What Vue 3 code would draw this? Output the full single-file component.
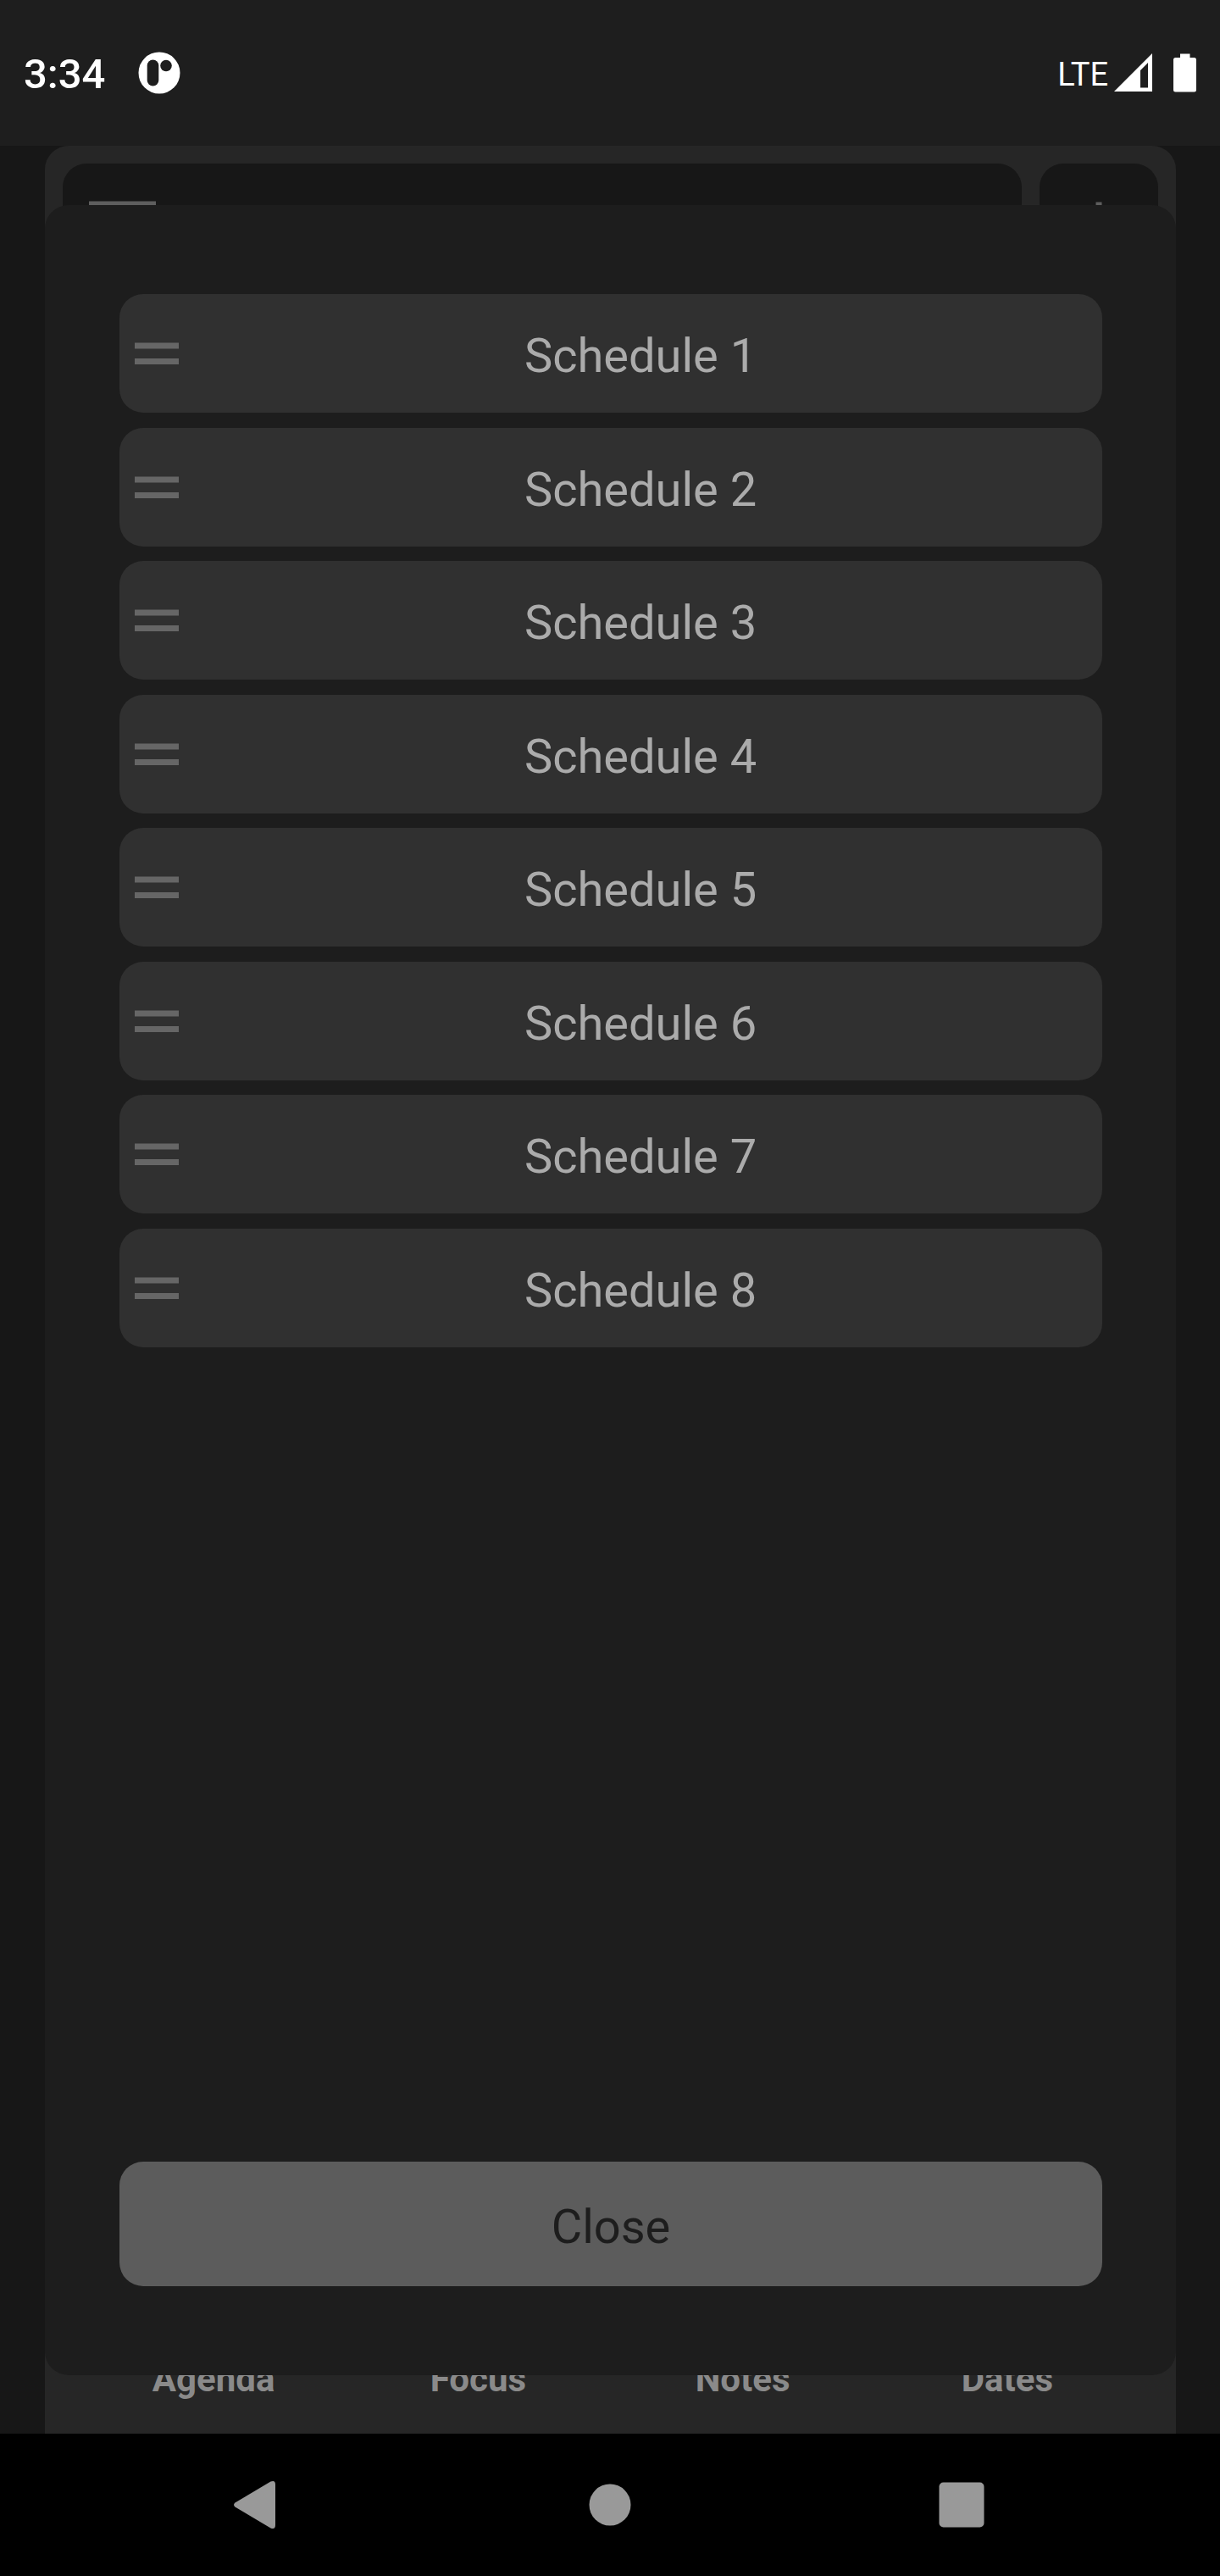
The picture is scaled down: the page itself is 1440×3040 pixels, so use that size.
<script setup>
const schedules = Array.from({ length: 8 }, (_, i) => `Schedule ${i + 1}`)
const tabs = ['Agenda', 'Focus', 'Notes', 'Dates']
</script>

<template>
  <div class="screen">
    <header class="status">
      <div class="status-side">
        <time class="clock">3:34</time>
        <svg class="logo" width="50" height="50" viewBox="0 0 50 50" aria-hidden="true">
          <circle cx="25" cy="25" r="24.5" fill="#fff" />
          <rect x="10.7" y="9.5" width="13.6" height="31" rx="6.8" fill="#1e1e1e" />
          <circle cx="33" cy="16.5" r="6.8" fill="#1e1e1e" />
        </svg>
      </div>
      <div class="status-side">
        <span class="network">LTE</span>
        <svg class="signal" width="46" height="46" viewBox="0 0 46 46" aria-hidden="true">
          <path fill="#fff" fill-rule="evenodd" d="M1 45 46 0V45ZM32 40.5H41V11L32 20Z" />
        </svg>
        <svg class="battery" width="27" height="46" viewBox="0 0 27 46" aria-hidden="true">
          <path fill="#fff" d="M8 0.5H19.5V5H24.5Q27 5 27 7.5V43Q27 45.5 24.5 45.5H2.5Q0 45.5 0 43V7.5Q0 5 2.5 5H8Z" />
        </svg>
      </div>
    </header>

    <main class="stage">
      <div class="page">
        <div class="toolbar">
          <button class="tool menu" type="button" aria-label="Menu">
            <svg width="79" height="52" viewBox="0 0 79 52" aria-hidden="true">
              <path d="M0 4.5H79M0 47.5H79" stroke="#5e5e5e" stroke-width="8" />
            </svg>
          </button>
          <button class="tool add" type="button" aria-label="Add">
            <svg width="50" height="50" viewBox="0 0 50 50" aria-hidden="true">
              <path d="M25 0.5V49.5M0.5 25H49.5" stroke="#5e5e5e" stroke-width="7" />
            </svg>
          </button>
        </div>
        <nav class="tabs">
          <a v-for="tab in tabs" :key="tab" class="tab" href="#">{{ tab }}</a>
        </nav>
      </div>

      <section class="modal" role="dialog" aria-label="Schedules">
        <ul class="list">
          <li v-for="name in schedules" :key="name" class="row">
            <svg class="handle" width="52" height="27" viewBox="0 0 52 27" aria-hidden="true">
              <path d="M0 4H52M0 22.5H52" stroke="#666" stroke-width="7" />
            </svg>
            <span class="name">{{ name }}</span>
          </li>
        </ul>
        <button class="close" type="button">Close</button>
      </section>
    </main>

    <footer class="system-nav">
      <button class="key" type="button" aria-label="Back">
        <svg width="64" height="64" viewBox="0 0 64 64" aria-hidden="true">
          <path fill="#999" d="M4.5 29.5 46.5 4.6Q52 2.5 52 8V56Q52 61.5 46.5 59.4L4.5 34.5Q1.5 32 4.5 29.5Z" />
        </svg>
      </button>
      <button class="key" type="button" aria-label="Home">
        <svg width="64" height="64" viewBox="0 0 64 64" aria-hidden="true">
          <circle cx="32" cy="32" r="24.5" fill="#999" />
        </svg>
      </button>
      <button class="key" type="button" aria-label="Recent apps">
        <svg width="64" height="64" viewBox="0 0 64 64" aria-hidden="true">
          <rect x="5.5" y="5.5" width="53" height="53" rx="5" fill="#999" />
        </svg>
      </button>
    </footer>
  </div>
</template>

<style>
body {
  margin: 0;
  background: #000;
}
</style>

<style scoped>
.screen {
  display: flex;
  flex-direction: column;
  min-height: 100vh;
  font-family: Roboto, "Liberation Sans", sans-serif;
  background: #171717;
}

button {
  margin: 0;
  padding: 0;
  border: 0;
  font: inherit;
  background: none;
}

svg {
  display: block;
  flex: none;
}

.status {
  display: flex;
  justify-content: space-between;
  height: 172px;
  padding: 0 28px;
  box-sizing: border-box;
  color: #fff;
  background: #1e1e1e;
}

.status-side {
  display: flex;
  align-items: center;
}

.clock {
  padding-top: 4px;
  font-size: 49px;
  font-weight: 500;
  line-height: 60px;
}

.logo {
  margin-left: 39px;
}

.network {
  padding-top: 4px;
  font-size: 38px;
  line-height: 60px;
}

.signal {
  margin-left: 6px;
}

.battery {
  margin-left: 25px;
}

.stage {
  position: relative;
  display: flex;
  flex: 1;
  padding: 0 52px 0 53px;
}

.page {
  display: flex;
  flex: 1;
  flex-direction: column;
  justify-content: space-between;
  border-radius: 28px 28px 0 0;
  background: #262626;
}

.toolbar {
  display: flex;
  gap: 21px;
  padding: 21px;
}

.tool {
  display: flex;
  align-items: center;
  height: 140px;
  border-radius: 28px;
  background: #171717;
}

.menu {
  flex: 1;
  padding-left: 31px;
}

.add {
  justify-content: center;
  width: 140px;
}

.tabs {
  display: flex;
  padding: 0 43px 40px;
}

.tab {
  flex: 1;
  font-size: 42px;
  font-weight: 700;
  line-height: 48px;
  text-align: center;
  text-decoration: none;
  color: #8a8a8a;
}

.modal {
  position: absolute;
  inset: 70px 52px 69px 53px;
  display: flex;
  flex-direction: column;
  justify-content: space-between;
  padding: 105px 87px 105px 88px;
  border-radius: 28px;
  background: #1d1d1d;
}

.list {
  margin: 0;
  padding: 0;
  list-style: none;
}

.row {
  display: flex;
  align-items: center;
  height: 140px;
  margin-bottom: 18px;
  padding-left: 18px;
  border-radius: 28px;
  background: #303030;
}

.row:nth-child(even) {
  margin-bottom: 17px;
}

.name {
  flex: 1;
  padding-top: 6px;
  font-size: 56px;
  line-height: 66px;
  text-align: center;
  color: #ababab;
}

.close {
  height: 147px;
  padding-top: 6px;
  border-radius: 28px;
  font-size: 56px;
  line-height: 66px;
  color: #1d1d1d;
  background: #5c5c5c;
}

.system-nav {
  display: flex;
  justify-content: center;
  gap: 351px;
  height: 168px;
  background: #000;
}
</style>
